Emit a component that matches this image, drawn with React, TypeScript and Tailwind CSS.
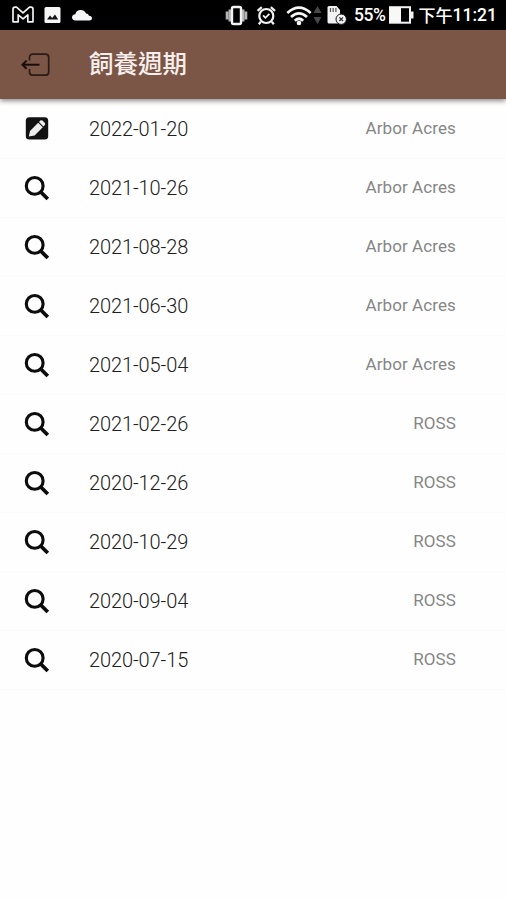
import React from "react";

interface Cycle {
  date: string;
  breed: string;
  editable?: boolean;
}

const cycles: Cycle[] = [
  { date: "2022-01-20", breed: "Arbor Acres", editable: true },
  { date: "2021-10-26", breed: "Arbor Acres" },
  { date: "2021-08-28", breed: "Arbor Acres" },
  { date: "2021-06-30", breed: "Arbor Acres" },
  { date: "2021-05-04", breed: "Arbor Acres" },
  { date: "2021-02-26", breed: "ROSS" },
  { date: "2020-12-26", breed: "ROSS" },
  { date: "2020-10-29", breed: "ROSS" },
  { date: "2020-09-04", breed: "ROSS" },
  { date: "2020-07-15", breed: "ROSS" },
];

const SearchIcon = () => (
  <svg width="26" height="26" viewBox="0 0 26 26" fill="none" stroke="#0c0c0c">
    <circle cx="10.7" cy="10.9" r="8.4" strokeWidth="3.1" />
    <path d="M16.8 17l7 7" strokeWidth="3.8" />
  </svg>
);

const EditIcon = () => (
  <svg width="26" height="26" viewBox="0 0 26 26">
    <rect x="1.8" y="1.2" width="22.4" height="22.4" rx="3.5" fill="#121212" />
    <path d="M4.8 20.5l1.2-5.6L14.2 6.7l4.6 4.6-8.2 8.1z" fill="#ededed" />
    <path d="M15 5.9l1.3-1.3q1.1-.9 2.2 0l2.3 2.3q.9 1.1 0 2.2l-1.3 1.3z" fill="#ededed" />
  </svg>
);

const ExitIcon = () => (
  <svg width="30" height="24" viewBox="0 0 30 24" fill="none" stroke="#2a1b16" strokeWidth="1.7">
    <path d="M8.5 7.5V4.5Q8.5 1.2 11.8 1.2H24.4Q27.7 1.2 27.7 4.5V18.9Q27.7 22.2 24.4 22.2H11.8Q8.5 22.2 8.5 18.9V16" />
    <path d="M18.5 11.7H1.5" stroke="#180d0a" strokeWidth="2" />
    <path d="M5.6 7.6L1.5 11.7L5.6 15.8" stroke="#180d0a" strokeWidth="2" />
  </svg>
);

// Barra di stato del telefono
const StatusBar = () => (
  <div className="flex h-[30px] items-center bg-black pr-[9px] pl-[12px] text-white">
    <svg width="22" height="18" viewBox="0 0 22 18" fill="none" stroke="#f2f2f2" strokeWidth="1.7" strokeLinejoin="round">
      <path d="M1 3.2Q1 1.2 3.2 1.2H4.5L11 6.8L17.5 1.2H18.8Q21 1.2 21 3.2V15.8H15.8V8.8L11 12.8L6.2 8.8V15.8H1Z" />
    </svg>
    <svg className="ml-[10px]" width="17" height="18" viewBox="0 0 17 18">
      <rect x=".5" y="1" width="16" height="16" rx="1.5" fill="#f5f5f5" />
      <path d="M3 13.5l3-4 2.2 2.4L11 8.4l3.2 5.1z" fill="#111" />
    </svg>
    <svg className="ml-[10px]" width="22" height="14" viewBox="0 0 22 14" fill="#f5f5f5">
      <path d="M4.5 12.5Q1 12.2 1 9.3Q1.2 6.5 4.3 6.2Q5.5 2 9.5 2Q13.5 1.8 15 5.5Q17.4 5.6 18 7.7Q21 7.8 21 10.2Q21 12.5 18.5 12.5Z" />
    </svg>

    <svg className="ml-[131px]" width="24" height="22" viewBox="0 0 24 22">
      <path d="M3 7.5v8M5.8 5.5v12M22 7.5v8M19.2 5.5v12" stroke="#b4b4b4" strokeWidth="2.6" />
      <rect x="8" y="3" width="9" height="17" rx="1.5" fill="#000" stroke="#f2f2f2" strokeWidth="2.4" />
    </svg>
    <svg className="ml-[7px]" width="22" height="22" viewBox="0 0 22 22" fill="none" stroke="#f2f2f2">
      <circle cx="11.3" cy="12" r="7" strokeWidth="2.2" />
      <path d="M8.1 11.4l2.3 2.4 4-4" strokeWidth="1.8" />
      <path d="M2.6 6.8l4.2-3.6M15.8 3.2l4.2 3.6M5.8 17.7l-2 2.5M16.8 17.7l2 2.5" strokeWidth="2.2" />
    </svg>
    <svg className="ml-[9px]" width="26" height="21" viewBox="0 0 26 21" fill="none" stroke="#f5f5f5" strokeWidth="2.7">
      <path d="M1.3 7.9Q13-2.5 24.7 7.9M5 12Q13 4.7 21 12M8.8 15.7Q13 11.8 17.2 15.7" />
      <circle cx="13" cy="18" r="2.3" fill="#f5f5f5" stroke="none" />
    </svg>
    <svg className="ml-[1px]" width="9" height="20" viewBox="0 0 9 20" fill="#484848">
      <path d="M4.5 1L8.5 8H.5zM4.5 19L8.5 12H.5z" />
    </svg>
    <svg className="ml-[5px]" width="21" height="20" viewBox="0 0 21 20">
      <path d="M.5 2.5Q.5 1 2 1H9.5L13 5V18.5H2Q.5 18.5 .5 17z" fill="#f2f2f2" />
      <path d="M3.5 3v4M6.2 3v4M8.9 3v4" stroke="#555" strokeWidth="1.2" />
      <circle cx="14.2" cy="14.2" r="5.2" fill="#f2f2f2" stroke="#111" />
      <path d="M12.4 12.4l3.6 3.6M16 12.4l-3.6 3.6" stroke="#333" strokeWidth="1.3" />
    </svg>
    <span className="ml-[6px] w-[34px] pt-[2px] font-[Roboto,sans-serif] text-[17.5px] leading-none font-medium tracking-[-0.5px] whitespace-nowrap">55%</span>
    <svg className="ml-[1px]" width="25" height="20" viewBox="0 0 25 20">
      <rect x="1" y="2.2" width="20" height="15.5" fill="#000" stroke="#f2f2f2" strokeWidth="2" />
      <rect x="1" y="2.2" width="11" height="15.5" fill="#f8f8f8" />
      <rect x="22" y="6.5" width="2.5" height="7" fill="#f2f2f2" />
    </svg>
    <span className="ml-auto flex items-center whitespace-nowrap">
      <span className="pb-[2px] font-['Noto_Sans_CJK_TC',sans-serif] text-[17px] leading-none font-medium">下午</span>
      <span className="pt-[2px] font-[Roboto,sans-serif] text-[17.5px] leading-none font-medium">11:21</span>
    </span>
  </div>
);

const CycleRow: React.FC<{ cycle: Cycle }> = ({ cycle }) => (
  <li className="flex h-[59px] items-center border-b border-[#fafafa] pr-[50px] pl-[23.5px]">
    <span className="w-[65.5px]">{cycle.editable ? <EditIcon /> : <SearchIcon />}</span>
    <span className="flex-1 text-[20px] font-[350] tracking-[-0.1px] text-[#202020]">{cycle.date}</span>
    <span className="text-[17px] tracking-[0.1px] text-[#868686]">{cycle.breed}</span>
  </li>
);

const App: React.FC = () => {
  return (
    <div className="h-[900px] w-full overflow-hidden bg-[#fefefe] font-[Roboto,'Noto_Sans_CJK_TC',sans-serif]">
      <StatusBar />
      <header className="flex h-[69px] items-center bg-[#7b5647] pl-[21px] shadow-[0_2px_5px_rgba(0,0,0,0.45)]">
        <ExitIcon />
        <h1 className="ml-[38px] pb-[2px] font-['Noto_Sans_CJK_TC',sans-serif] text-[24.5px] leading-none font-medium text-[#f7efec]">飼養週期</h1>
      </header>

      {/* Elenco dei cicli di allevamento */}
      <ul className="pt-px">
        {cycles.map((cycle) => (
          <CycleRow key={cycle.date} cycle={cycle} />
        ))}
      </ul>
    </div>
  );
};

export default App;
